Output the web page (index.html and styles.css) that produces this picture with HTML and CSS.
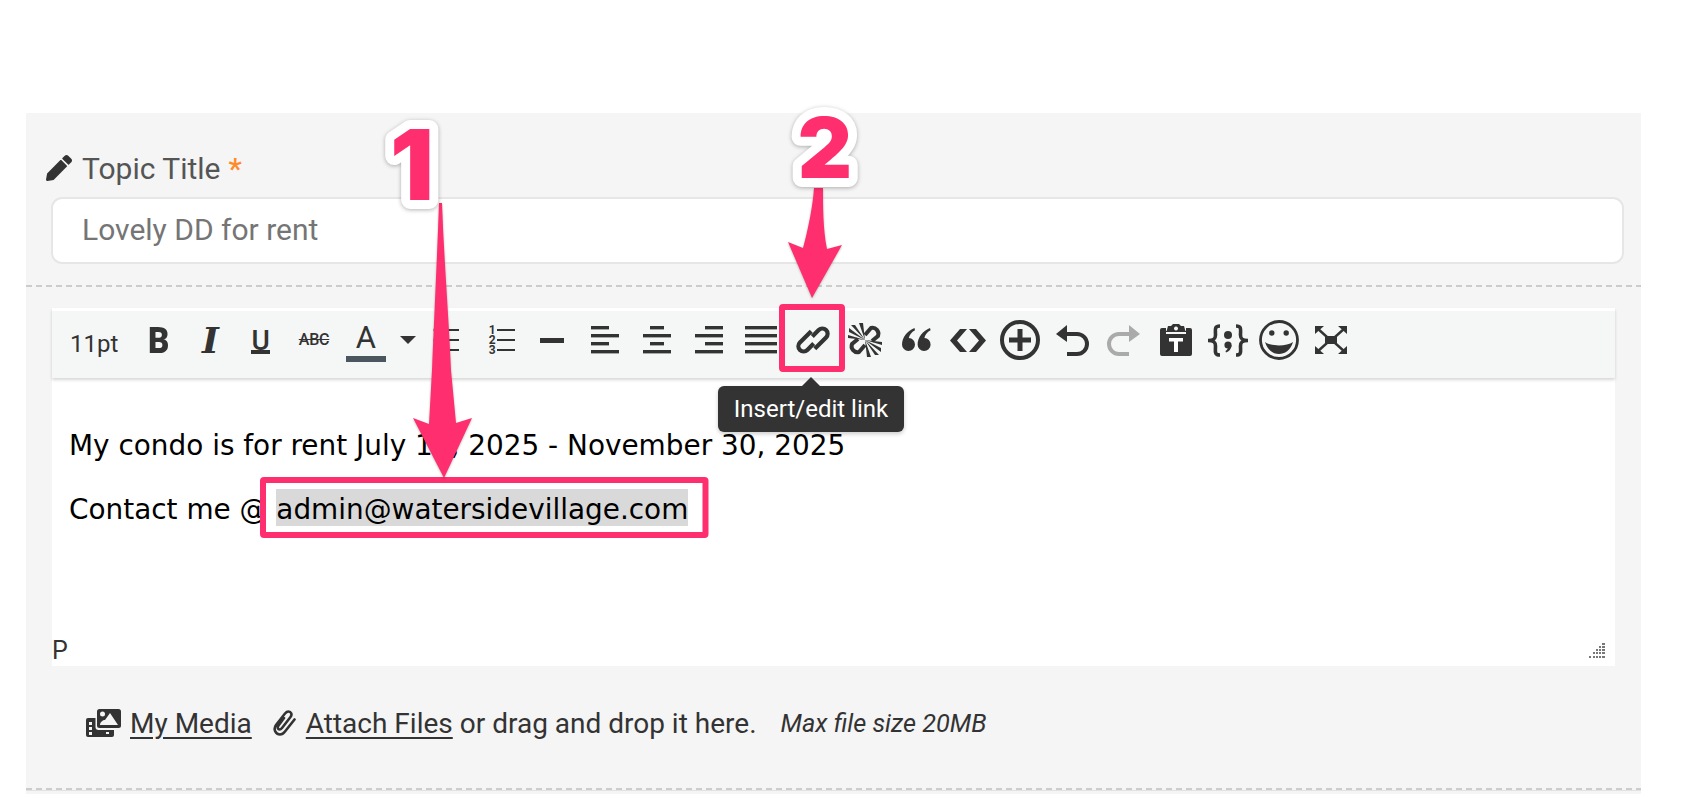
FILE: index.html
```html
<!DOCTYPE html>
<html lang="en">
<head>
<meta charset="utf-8">
<title>Topic editor</title>
<link rel="stylesheet" href="styles.css">
</head>
<body>
<div class="page">
  <main class="panel">
    <label class="title-label">
      <svg class="pencil" viewBox="0 0 512 512"><path d="M497.9 142.1l-46.1 46.1c-4.7 4.7-12.3 4.7-17 0l-111-111c-4.7-4.7-4.7-12.3 0-17l46.1-46.1c18.7-18.7 49.1-18.7 67.9 0l60.1 60.1c18.8 18.7 18.8 49.1 0 67.9zM284.2 99.8L21.6 362.4.4 483.9c-2.9 16.4 11.4 30.6 27.8 27.8l121.5-21.3 262.6-262.6c4.7-4.7 4.7-12.3 0-17l-111-111c-4.8-4.7-12.4-4.7-17.1 0z"/></svg>
      <span>Topic Title</span><span class="req">*</span>
    </label>
    <div class="title-input">Lovely DD for rent</div>
    <div class="dash dash-top"></div>

    <div class="toolbar">
      <div class="fontsize">11pt</div>
      <div class="tool"><span class="g-b">B</span></div>
      <div class="tool"><span class="g-i">I</span></div>
      <div class="tool"><span class="g-u">U</span></div>
      <div class="tool"><span class="g-s">ABC</span></div>
      <div class="tool"><span class="g-a">A</span></div>
      <div class="tool caret-tool"><span class="caret"></span></div>
      <div class="tool"><svg class="ic" width="34" height="30" viewBox="0 0 34 30"><g fill="#333"><circle cx="3" cy="5" r="2.5"/><circle cx="3" cy="15" r="2.5"/><circle cx="3" cy="25" r="2.5"/><rect x="9" y="4" width="17" height="2"/><rect x="9" y="14" width="17" height="2"/><rect x="9" y="24" width="17" height="2"/></g></svg></div>
      <div class="tool">
        <div class="ol">
          <div class="ol-row"><span>1</span><i></i></div>
          <div class="ol-row"><span>2</span><i></i></div>
          <div class="ol-row"><span>3</span><i></i></div>
        </div>
      </div>
      <div class="tool"><span class="hr-bar"></span></div>
      <div class="tool"><svg class="ic" width="28" height="28" viewBox="0 0 28 28"><g fill="#333"><rect width="18" height="3.4"/><rect y="8" width="28" height="3.4"/><rect y="16" width="18" height="3.4"/><rect y="24" width="28" height="3.4"/></g></svg></div>
      <div class="tool"><svg class="ic" width="28" height="28" viewBox="0 0 28 28"><g fill="#333"><rect x="7" width="14" height="3.4"/><rect y="8" width="28" height="3.4"/><rect x="7" y="16" width="14" height="3.4"/><rect y="24" width="28" height="3.4"/></g></svg></div>
      <div class="tool"><svg class="ic" width="28" height="28" viewBox="0 0 28 28"><g fill="#333"><rect x="10" width="18" height="3.4"/><rect y="8" width="28" height="3.4"/><rect x="10" y="16" width="18" height="3.4"/><rect y="24" width="28" height="3.4"/></g></svg></div>
      <div class="tool"><svg class="ic" width="32" height="28" viewBox="0 0 32 28"><g fill="#333"><rect width="32" height="3.4"/><rect y="8" width="32" height="3.4"/><rect y="16" width="32" height="3.4"/><rect y="24" width="32" height="3.4"/></g></svg></div>
      <div class="tool"><svg class="ic" width="34" height="34" viewBox="0 0 34 34"><g transform="rotate(-45 17 17)" fill="none" stroke="#333" stroke-width="4.2"><path d="M22 9.500H6a5.250 5.250 0 0 0 0 10.500H15"/><path d="M12 24.500H28a5.250 5.250 0 0 0 0-10.500H19"/></g></svg></div>
      <div class="tool"><svg class="ic" width="34" height="34" viewBox="0 0 34 34"><g fill="none" stroke="#333" stroke-width="4"><path d="M17 12 L23 5 a6 6 0 0 1 7 8 L24 18"/><path d="M17 22 L11 29 a6 6 0 0 1 -7 -8 L10 16"/></g><g fill="#333"><path d="M17 17 1 9V5zM17 17 3 2h4zM17 17 11 0h4z"/><path d="M17 17 33 25v4zM17 17 31 32h-4zM17 17 23 34h-4z"/><path d="M17 17 0 12v3zM17 17 34 22v-3z"/></g></svg></div>
      <div class="tool"><svg class="ic" width="29" height="24" viewBox="0 0 29 24"><g fill="#333"><path d="M12.5 0C5.5 3 0 9 0 16.5A6.5 6.5 0 1 0 6.8 10C7.5 7 9.5 4 13 2.2z"/><path d="M28 0C21 3 15.6 9 15.6 16.5A6.5 6.5 0 1 0 22.4 10C23 7 25 4 28.6 2.2z"/></g></svg></div>
      <div class="tool"><svg class="ic" width="36" height="23" viewBox="0 0 36 23"><path fill="#333" d="M10 0h7L7 11.5 17 23h-7L0 11.5zM26 0h-7l10 11.5L19 23h7l10-11.5z"/></svg></div>
      <div class="tool"><svg class="ic" width="40" height="40" viewBox="0 0 40 40"><circle cx="20" cy="20" r="18" fill="none" stroke="#333" stroke-width="4"/><path fill="#333" d="M17.5 9h5v8.500H31v5h-8.500V31h-5v-8.500H9v-5h8.500z"/></svg></div>
      <div class="tool"><svg class="ic" width="33" height="31" viewBox="0 0 33 31"><path fill="#333" d="M0 9 11 0v17z"/><path fill="none" stroke="#333" stroke-width="4" d="M9 9H21a9.500 9.500 0 0 1 0 20H11"/></svg></div>
      <div class="tool"><svg class="ic" width="33" height="31" viewBox="0 0 33 31"><path fill="#aaa" d="M33 9 22 0v17z"/><path fill="none" stroke="#aaa" stroke-width="4" d="M24 9H12a9.500 9.500 0 0 0 0 20H22"/></svg></div>
      <div class="tool"><svg class="ic" width="32" height="32" viewBox="0 0 32 32"><path fill="#333" d="M2 4h4v3h20V4h4a2 2 0 0 1 2 2v24a2 2 0 0 1-2 2H2a2 2 0 0 1-2-2V6a2 2 0 0 1 2-2z"/><path fill="#333" fill-rule="evenodd" d="M11 2 13 0h6l2 2h3l2 7H6l2-7zM16 2.500a2 2 0 1 0 .01 0z"/><path fill="#f5f7f7" d="M6 8h20v2H6z"/><path fill="#fff" d="M9 14h14v3.500h-5V28h-4V17.500H9z"/></svg></div>
      <div class="tool"><svg class="ic" width="42" height="33" viewBox="0 0 42 33"><g fill="none" stroke="#333" stroke-width="3.600"><path d="M13 2C7 2 8.500 6 8.500 11 8.500 15 7 16.500 1 16.500 7 16.500 8.500 18 8.500 22 8.500 27 7 31 13 31"/><path d="M29 2C35 2 33.500 6 33.500 11 33.500 15 35 16.500 41 16.500 35 16.500 33.500 18 33.500 22 33.500 27 35 31 29 31"/></g><g fill="#333"><circle cx="21" cy="11" r="4"/><circle cx="21" cy="21" r="3.600"/><path d="M24.500 21C24.500 25 22 27.500 19 28.500L18.500 27C20 26 21 24.500 21 23z"/></g></svg></div>
      <div class="tool"><svg class="ic" width="40" height="40" viewBox="0 0 40 40"><circle cx="20" cy="20" r="18.500" fill="none" stroke="#333" stroke-width="2.800"/><circle cx="12.800" cy="13" r="2.700" fill="#333"/><circle cx="27.200" cy="13" r="2.700" fill="#333"/><path fill="#333" d="M6 22C12 26.500 28 26.500 34 22 31.500 30.500 25.500 34 20 34 14.500 34 8.500 30.500 6 22z"/></svg></div>
      <div class="tool"><svg class="ic" width="32" height="28" viewBox="0 0 32 28"><rect x="10" y="10" width="12" height="8" fill="#333"/><g stroke="#333" stroke-width="2.400"><path d="M2 2 12 11M30 2 20 11M2 26 12 17M30 26 20 17"/></g><path fill="#333" d="M0 0h9L0 8zM32 0h-9l9 8zM0 28h9L0 20zM32 28h-9l9-8z"/></svg></div>
    </div>

    <div class="editor">
      <div class="editor-body">
        <p>My condo is for rent July 15, 2025 - November 30, 2025</p>
        <p>Contact me @ <span class="selected">admin@watersidevillage.com</span></p>
      </div>
      <div class="statusbar">
        <span class="path">P</span>
        <svg class="grip" width="16" height="15" viewBox="0 0 16 15" fill="#777"><path d="M13 0h3v2h-3zM10 3h2v2h-2zM13 3h3v2h-3zM7 6h2v2H7zM10 6h2v2h-2zM13 6h3v2h-3zM4 9h2v2H4zM7 9h2v2H7zM10 9h2v2h-2zM13 9h3v2h-3zM0 13h2v2H0zM4 13h2v2H4zM7 13h2v2H7zM10 13h2v2h-2zM13 13h3v2h-3z"/></svg>
      </div>
    </div>

    <div class="media-row">
      <svg class="media-ic" width="35" height="28" viewBox="0 0 35 28"><path fill="#333" d="M2 9h26v17a2 2 0 0 1-2 2H2a2 2 0 0 1-2-2V11a2 2 0 0 1 2-2z"/><g fill="#f5f5f5"><rect x="3" y="13" width="3" height="3"/><rect x="3" y="18" width="3" height="3"/><rect x="3" y="23" width="3" height="3"/><rect x="20" y="23" width="3" height="2"/></g><rect x="9.500" y="-1" width="26.500" height="22" rx="3" fill="#f5f5f5"/><rect x="11" y="0" width="24" height="19" rx="2.500" fill="#333"/><circle cx="16.500" cy="5" r="2.500" fill="#f5f5f5"/><path fill="#f5f5f5" d="M14 16 C14 13 17 11 19 11 L24 4 L32 16z"/></svg>
      <a class="media-link">My Media</a>
      <svg class="clip-ic" width="24" height="26" viewBox="0 0 24 26"><path fill="none" stroke="#333" stroke-width="2.600" stroke-linecap="round" d="M11 8 5.500 15.500C4 17.500 5 19.500 6.500 19.500 7.500 19.500 8.200 19 9 18L17.500 7C19.500 4.500 18 1.500 15.500 1.500 14 1.500 13 2.300 12 3.500L3 15C0 19 2.500 24.500 7 24.500 9 24.500 10.500 23.500 12 21.500L21.500 9.500"/></svg>
      <a class="attach-link">Attach Files</a>
      <span class="drop-text">or drag and drop it here.</span>
      <em class="max-size">Max file size 20MB</em>
    </div>
    <div class="dash dash-bottom"></div>
    <div class="rule"></div>
  </main>

  <div class="tooltip">Insert/edit link</div>

  <svg class="annotations" width="1686" height="794" viewBox="0 0 1686 794">
    <rect class="mark" x="263" y="480" width="442.500" height="55" rx="1"/>
    <rect class="mark" x="782" y="307" width="60" height="62" rx="1"/>
    <path class="arrow" d="M439 203 442 203C444 260 449 320 451 370L456 423 472 418 444 478 413 418 429 424 432 370C434 320 437 260 439 203z"/>
    <path class="arrow" d="M814 188H823C823 205 823 230 827 249L842 245 812 298 788 242 803 248C808 230 813 205 814 188z"/>
    <text class="badge" x="412" y="200" text-anchor="middle" font-size="97">1</text>
    <text class="badge" x="825" y="178" text-anchor="middle" font-size="84">2</text>
  </svg>
</div>
</body>
</html>
```

FILE: styles.css
```css
* { box-sizing: border-box; }
html, body { margin: 0; padding: 0; height: 794px; overflow: hidden; background: #fff; }
body { font-family: Roboto, "Liberation Sans", sans-serif; color: #333; }

.page { position: relative; width: 1686px; height: 794px; padding: 113px 0 0 26px; }

.panel { width: 1615px; height: 681px; background: #f5f5f5; padding-top: 38px; }

.title-label { display: flex; align-items: center; height: 34px; margin-left: 20px; font-size: 30px; color: #555; }
.pencil { width: 26px; height: 26px; fill: #333; margin-right: 10px; }
.req { color: #ff8a2b; margin-left: 8px; font-weight: 500; }

.title-input { height: 67px; width: 1573px; margin: 12px 0 0 25px; padding: 0 0 2px 29px; display: flex; align-items: center; background: #fff; border: 2px solid #e6e6e6; border-radius: 11px; font-size: 30px; color: #757575; }

.dash { height: 2px; background: repeating-linear-gradient(90deg, #ccc 0 6px, transparent 6px 10px); }
.dash-top { margin-top: 21px; }

.toolbar { display: flex; align-items: center; width: 1563px; height: 70px; margin: 21px 0 0 26px; padding-bottom: 9px; border-top: 3px solid #fff; background: #f5f7f7; box-shadow: 0 2px 3px rgba(0,0,0,.16); position: relative; }
.fontsize { flex: 0 0 80.6px; padding: 7px 0 0 18px; font-size: 24px; color: #333; }
.tool { flex: 0 0 51.85px; display: flex; justify-content: center; align-items: center; height: 40px; color: #333; }
.caret-tool { flex-basis: 32.2px; }
.ic { display: block; flex: none; overflow: visible; }

.g-b { font: 900 36px/42px Roboto, sans-serif; display: block; height: 40px; transform: scaleX(.92); }
.g-i { font: italic 700 36px/40px "DejaVu Serif", serif; display: block; }
.g-u { font: 500 28px/25px Roboto, sans-serif; display: block; width: 19px; height: 26px; margin: 2px 3px 0 0; border-bottom: 4px solid #333; text-align: center; }
.g-s { font: 500 16px/20px Roboto, sans-serif; text-decoration: line-through; letter-spacing: -.2px; }
.g-a { font: 400 31px/36px Roboto, sans-serif; width: 40px; height: 40px; text-align: center; position: relative; display: block; }
.g-a::after { content: ""; position: absolute; left: 0; top: 36px; width: 40px; height: 6px; background: #4c5660; }
.caret { width: 0; height: 0; border-left: 8px solid transparent; border-right: 8px solid transparent; border-top: 8px solid #333; }
.ol { display: flex; flex-direction: column; width: 26px; }
.ol-row { display: flex; align-items: center; justify-content: space-between; height: 10px; font: 700 12px/10px Roboto, sans-serif; }
.ol-row i { display: block; width: 18px; height: 2px; background: #333; }
.hr-bar { width: 24px; height: 5px; background: #333; margin-left: -3px; }

.editor { width: 1563px; height: 288px; margin-left: 26px; background: #fff; display: flex; flex-direction: column; justify-content: space-between; }
.editor-body { padding: 36px 0 0 17px; font: 400 27.9px/64px "DejaVu Sans", sans-serif; color: #000; }
.editor-body p { margin: 0; height: 64px; }
.selected { background: #d9d9d9; padding: 4px 0 0; }
.statusbar { display: flex; justify-content: space-between; align-items: flex-end; padding: 0 10px 1px 0; }
.path { font-size: 25px; line-height: 28px; color: #333; margin-left: 0; }
.grip { display: block; margin-bottom: 7px; }

.media-row { display: flex; align-items: center; height: 40px; margin: 37px 0 0 60px; font-size: 28px; color: #333; }
.media-ic { flex: none; margin-right: 9px; }
.clip-ic { flex: none; margin: 0 9px 0 21px; }
.media-link, .attach-link { text-decoration: underline; text-underline-offset: 4px; }
.drop-text { margin-left: 7px; }
.max-size { margin-left: 24px; font-size: 25.3px; }

.dash-bottom { margin-top: 45px; }
.rule { height: 1px; background: #e2e2e2; }

.tooltip { position: absolute; left: 718px; top: 386px; width: 186px; height: 46px; display: flex; align-items: center; justify-content: center; background: #333; color: #fff; border-radius: 6px; font-size: 24px; box-shadow: 0 2px 4px rgba(0,0,0,.2); }
.tooltip::before { content: ""; position: absolute; left: 84px; top: -9px; border-left: 9px solid transparent; border-right: 9px solid transparent; border-bottom: 9px solid #333; }

.annotations { position: absolute; left: 0; top: 0; pointer-events: none; }
.mark { fill: none; stroke: #ff2e6e; stroke-width: 6; }
.arrow { fill: #ff2e6e; filter: drop-shadow(0 1px 1px rgba(0,0,0,.25)); }
.badge { font-family: Inter, "DejaVu Sans", sans-serif; font-weight: 900; fill: #ff2e6e; stroke: #fff; stroke-width: 18px; stroke-linejoin: round; paint-order: stroke; filter: drop-shadow(0 1px 2px rgba(0,0,0,.3)); }
```
